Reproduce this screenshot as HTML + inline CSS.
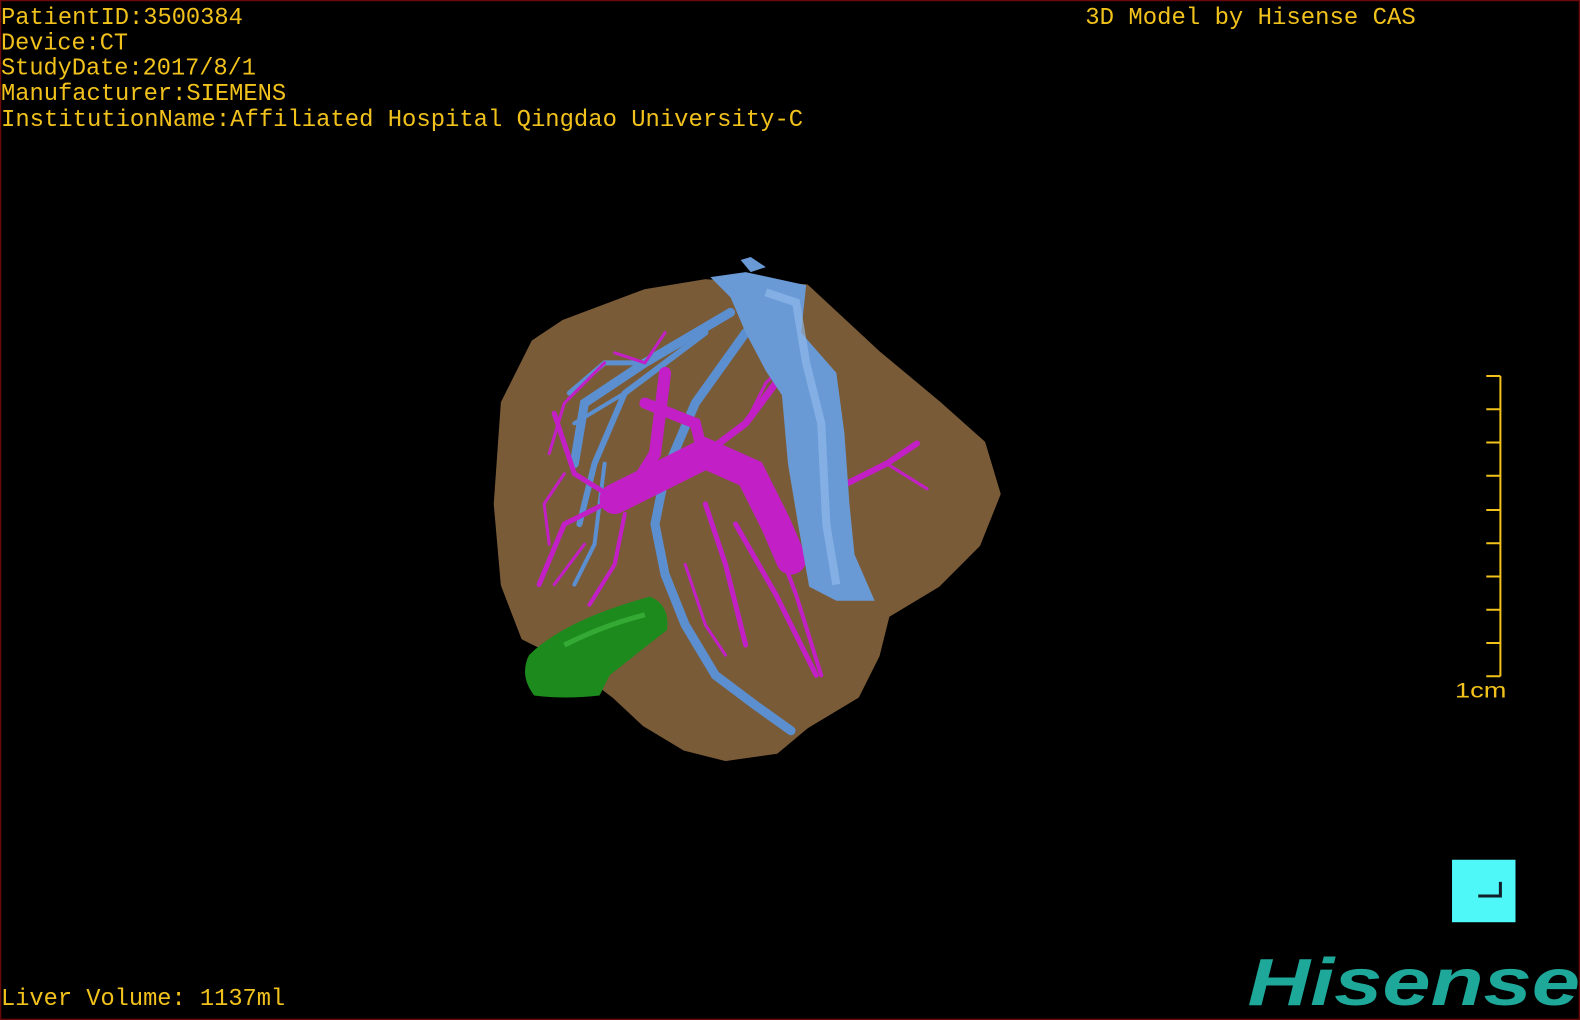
<!DOCTYPE html>
<html><head><meta charset="utf-8"><style>
html,body{margin:0;padding:0;background:#000;width:1580px;height:1020px;overflow:hidden}
svg{display:block}
text{font-family:"Liberation Mono",monospace;fill:#f2c21c}
</style></head><body>
<svg width="1580" height="1020" viewBox="0 0 1568 1012" preserveAspectRatio="none">
<rect x="0.5" y="0.5" width="1567" height="1011" fill="#000" stroke="#6a0a0a" stroke-width="1.5"/>
<text x="1" y="24" font-size="24" textLength="240" lengthAdjust="spacingAndGlyphs">PatientID:3500384</text>
<text x="1" y="49" font-size="24" textLength="126" lengthAdjust="spacingAndGlyphs">Device:CT</text>
<text x="1" y="74" font-size="24" textLength="253" lengthAdjust="spacingAndGlyphs">StudyDate:2017/8/1</text>
<text x="1" y="99" font-size="24" textLength="283" lengthAdjust="spacingAndGlyphs">Manufacturer:SIEMENS</text>
<text x="1" y="125" font-size="24" textLength="796" lengthAdjust="spacingAndGlyphs">InstitutionName:Affiliated Hospital Qingdao University-C</text>
<text x="1077" y="24" font-size="24" textLength="328" lengthAdjust="spacingAndGlyphs">3D Model by Hisense CAS</text>
<text x="1" y="997" font-size="24" textLength="282" lengthAdjust="spacingAndGlyphs">Liver Volume: 1137ml</text>
<g stroke="#f2c21c" stroke-width="2" fill="none">
<path d="M1489 373V671M1475 373h14M1475 406h14M1475 439h14M1475 472h14M1475 506h14M1475 539h14M1475 572h14M1475 605h14M1475 638h14M1475 671h14"/>
</g>
<text x="1444" y="692" font-size="21" textLength="51" lengthAdjust="spacingAndGlyphs" style="font-family:'Liberation Sans',sans-serif">1cm</text>
<rect x="1441" y="853" width="63" height="62" fill="#4ef8f8"/>
<path d="M1467 889h22v-14" stroke="#10202a" stroke-width="3" fill="none"/>
<text x="1238" y="997" font-size="66" font-weight="bold" font-style="italic" style="font-family:'Liberation Sans',sans-serif;fill:#1ea89a" textLength="330" lengthAdjust="spacingAndGlyphs">Hisense</text>
<path d="M560 320L640 290L700 280L800 285L870 350L930 400L975 440L990 490L970 540L930 580L880 610L870 650L850 690L800 720L770 745L720 752L680 742L640 718L610 690L560 652L520 632L500 580L493 500L500 400L530 340Z" fill="#7a5b38" stroke="#7a5b38" stroke-width="6" stroke-linejoin="round"/>
<g stroke="#5b8fd0" fill="none" stroke-linecap="round">
<path d="M725 310L640 360L580 400L570 460" stroke-width="9"/>
<path d="M700 330L620 390L590 460L575 520" stroke-width="6"/>
<path d="M740 330L690 400L660 470L650 520L660 570L680 620L710 670L750 700L785 725" stroke-width="9"/>
<path d="M640 360L600 360L565 390" stroke-width="5"/>
<path d="M620 390L570 420" stroke-width="4"/>
<path d="M600 460L590 540L570 580" stroke-width="4"/>
</g>
<g stroke="#c21fc6" fill="none" stroke-linecap="round">
<path d="M610 495L660 470L700 450L745 470L770 520L785 555" stroke-width="30"/>
<path d="M625 490L650 450L660 370" stroke-width="12"/>
<path d="M640 400L690 420L700 460" stroke-width="11"/>
<path d="M700 450L740 420L770 380" stroke-width="7"/>
<path d="M610 495L570 470L550 410" stroke-width="5"/>
<path d="M600 500L560 520L535 580" stroke-width="5"/>
<path d="M620 510L610 560L585 600" stroke-width="4"/>
<path d="M700 500L720 560L740 640" stroke-width="5"/>
<path d="M730 520L770 590L810 670" stroke-width="5"/>
<path d="M760 510L790 590L815 670" stroke-width="4"/>
<path d="M840 480L880 460L910 440" stroke-width="6"/>
<path d="M880 460L920 485" stroke-width="3"/>
<path d="M600 360L560 400L545 450" stroke-width="3"/>
<path d="M660 330L640 360L610 350" stroke-width="3"/>
<path d="M740 420L760 380L790 350" stroke-width="3"/>
<path d="M680 560L700 620L720 650" stroke-width="3"/>
<path d="M560 470L540 500L545 540" stroke-width="3"/>
<path d="M580 540L550 580" stroke-width="3"/>
</g>
<path d="M705 275L740 270L800 283L795 330L830 370L838 430L843 500L848 550L868 596L830 596L803 582L792 520L782 460L776 392L760 368L740 330L725 295Z" fill="#6a9ad6"/>
<path d="M760 290L790 300L800 360L815 420L820 520L830 580" stroke="#8fb8ea" stroke-width="8" fill="none" opacity="0.7"/>
<path d="M735 258L745 255L760 265L745 270Z" fill="#6a9ad6"/>
<path d="M525 650Q560 615 645 592Q665 600 662 625Q630 650 605 670L595 690Q560 694 530 690Q515 670 525 650Z" fill="#1c8a1c"/>
<path d="M560 640Q600 620 640 610" stroke="#3fb83f" stroke-width="5" fill="none" opacity="0.7"/>
</svg>
</body></html>
